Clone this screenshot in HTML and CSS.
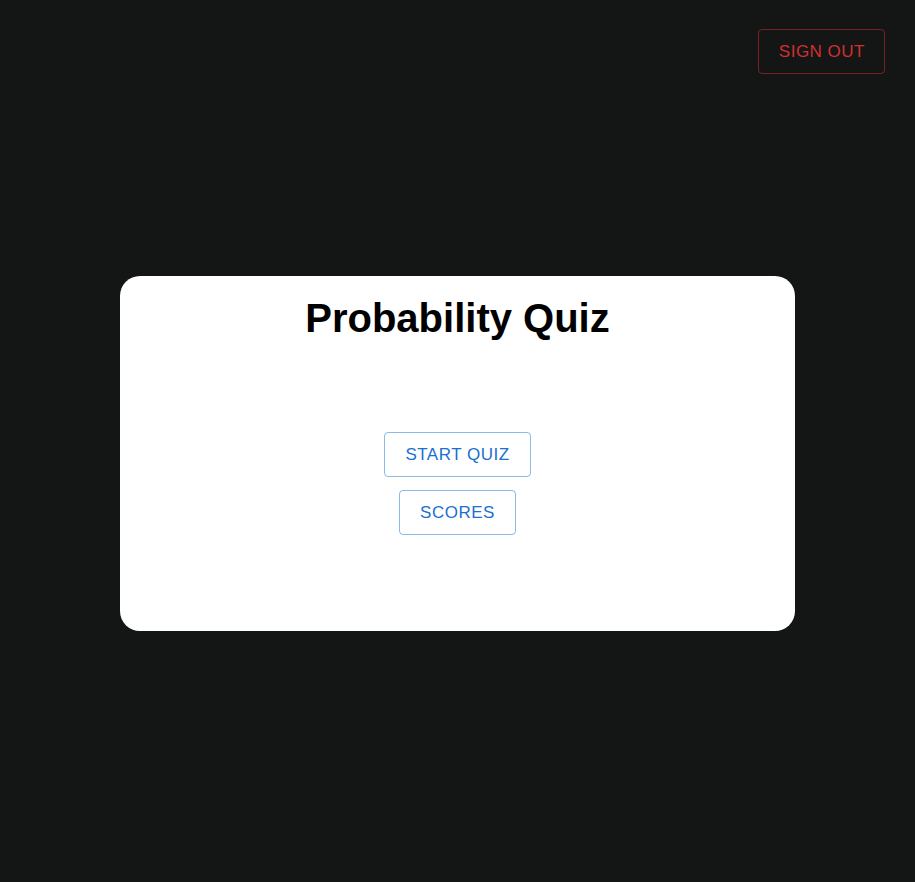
FILE: index.html
```html
<!DOCTYPE html>
<html lang="en">
<head>
<meta charset="utf-8">
<title>Probability Quiz</title>
<link rel="stylesheet" href="styles.css">
</head>
<body>
<div class="page">
  <header class="topbar">
    <button class="btn btn-danger" type="button">Sign out</button>
  </header>
  <main class="main">
    <section class="card">
      <h1 class="title">Probability Quiz</h1>
      <div class="actions">
        <button class="btn btn-primary" type="button">Start quiz</button>
        <button class="btn btn-primary" type="button">Scores</button>
      </div>
    </section>
  </main>
</div>
</body>
</html>
```

FILE: styles.css
```css
html, body {
  margin: 0;
  padding: 0;
}
body {
  background: #141616;
  font-family: "Liberation Sans", Arial, Helvetica, sans-serif;
}
.page {
  min-height: 882px;
  display: flex;
  flex-direction: column;
}
.topbar {
  display: flex;
  justify-content: flex-end;
  padding: 29px 30px 29px 30px;
}
.main {
  flex: 1;
  display: flex;
  align-items: center;
  justify-content: center;
  padding-bottom: 79px;
}
.card {
  width: 675px;
  box-sizing: border-box;
  background: #ffffff;
  border-radius: 20px;
  padding: 20px 0 96px;
  display: flex;
  flex-direction: column;
  align-items: center;
}
.title {
  margin: 0 0 91px;
  font-size: 40px;
  font-weight: 700;
  color: #000;
  line-height: normal;
}
.actions {
  display: flex;
  flex-direction: column;
  align-items: center;
  gap: 13px;
}
.btn {
  font-family: "Liberation Sans", Arial, Helvetica, sans-serif;
  font-size: 17px;
  font-weight: 400;
  letter-spacing: 0.5px;
  line-height: 29px;
  text-transform: uppercase;
  background: transparent;
  border-radius: 4px;
  padding: 7px 20px;
  cursor: pointer;
  margin: 0;
}
.btn-danger {
  color: #d32f2f;
  border: 1px solid rgba(211, 47, 47, 0.5);
  padding: 7px 19px 7px 20px;
}
.btn-primary {
  color: #1a6fd0;
  border: 1px solid rgba(25, 118, 210, 0.5);
}
```
